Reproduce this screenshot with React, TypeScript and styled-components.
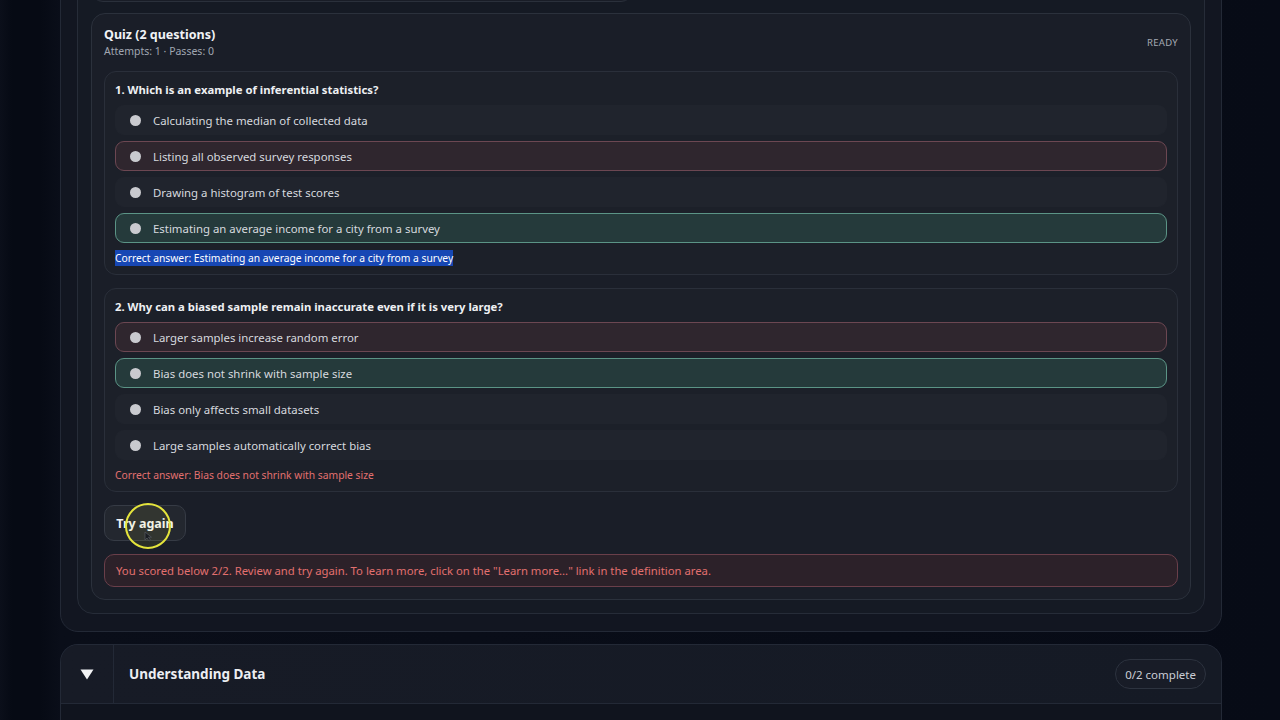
import React from "react";
import styled, { createGlobalStyle } from "styled-components";

const GlobalStyle = createGlobalStyle`
  html, body {
    margin: 0;
    padding: 0;
    height: 100%;
    overflow: hidden;
    background: #070b16;
  }
  body {
    font-family: "Noto Sans", "Open Sans", sans-serif;
    color: #e6e8ec;
  }
`;

const Page = styled.div`
  min-height: 720px;
  background: linear-gradient(90deg, #0b0f1a 0px, #060a14 12px, #060a14 40px, #0a0e19 60px, #070b16 100%);
  padding: 0 58px 0 60px;
  display: flex;
  flex-direction: column;
  gap: 12px;
`;

const ModuleCard = styled.section<{ $offset?: number }>`
  margin-top: ${(p) => p.$offset ?? 0}px;
  background: #121621;
  border: 1px solid #232936;
  border-radius: 18px;
  padding: 16px 16px 17px;
`;

const LessonBody = styled.div`
  background: #151a24;
  border: 1px solid #262c38;
  border-radius: 16px;
  padding: 13px;
  display: flex;
  flex-direction: column;
  gap: 11px;
`;

const DefinitionBox = styled.div`
  width: 540px;
  height: 60px;
  background: #191d27;
  border: 1px solid #2a303b;
  border-radius: 12px;
`;

const QuizCard = styled.div`
  background: #1a1e28;
  border: 1px solid #2b313c;
  border-radius: 14px;
  padding: 12px 12px 12px;
  display: flex;
  flex-direction: column;
  gap: 13px;
`;

const QuizHeader = styled.div`
  display: flex;
  justify-content: space-between;
  align-items: center;
`;

const QuizTitle = styled.div`
  font-size: 12.5px;
  font-weight: 700;
  line-height: 18px;
  color: #f1f3f6;
`;

const QuizMeta = styled.div`
  font-size: 10.5px;
  line-height: 14px;
  color: #a0a6b1;
`;

const Status = styled.div`
  font-size: 9.5px;
  letter-spacing: 0.3px;
  color: #a4aab4;
  text-transform: uppercase;
`;

const QuestionCard = styled.div`
  background: #1c2029;
  border: 1px solid #2a2f3a;
  border-radius: 12px;
  padding: 9px 10px 8px;
  display: flex;
  flex-direction: column;
`;

const QuestionTitle = styled.div`
  font-size: 11.3px;
  font-weight: 700;
  line-height: 18px;
  color: #eef0f3;
  margin-bottom: 6px;
`;

const Options = styled.div`
  display: flex;
  flex-direction: column;
  gap: 6px;
`;

type OptionState = "idle" | "wrong" | "right";

const optionColors: Record<OptionState, { bg: string; border: string }> = {
  idle: { bg: "#20242d", border: "#20242d" },
  wrong: { bg: "#2f262e", border: "#6c4752" },
  right: { bg: "#253a3b", border: "#5b9486" },
};

const OptionRow = styled.div<{ $state: OptionState }>`
  height: 30px;
  box-sizing: border-box;
  display: flex;
  align-items: center;
  gap: 12px;
  padding: 0 14px;
  border-radius: 9px;
  background: ${(p) => optionColors[p.$state].bg};
  border: 1px solid ${(p) => optionColors[p.$state].border};
  font-size: 11.4px;
  color: #d6d9df;
`;

const Radio = styled.span`
  width: 11px;
  height: 11px;
  border-radius: 50%;
  background: #c9cacf;
  flex-shrink: 0;
`;

const AnswerNote = styled.div<{ $tone: "selected" | "error" }>`
  margin-top: 8px;
  font-size: 10.3px;
  line-height: 15px;
  color: ${(p) => (p.$tone === "error" ? "#e2706f" : "#ffffff")};

  span {
    background: ${(p) => (p.$tone === "selected" ? "#1747b4" : "transparent")};
    padding: 1px 0;
  }
`;

const ButtonRow = styled.div`
  position: relative;
  display: flex;
`;

const RetryButton = styled.button`
  height: 36px;
  width: 82px;
  border-radius: 10px;
  background: #23272f;
  border: 1px solid #363b45;
  color: #f2f3f5;
  font-family: inherit;
  font-size: 12.5px;
  font-weight: 700;
  cursor: pointer;
`;

// click highlight left over from the screen recording
const CursorHalo = styled.svg`
  position: absolute;
  left: 20px;
  top: -3px;
  pointer-events: none;
`;

const ScoreMessage = styled.div`
  height: 33px;
  box-sizing: border-box;
  display: flex;
  align-items: center;
  padding: 0 11px;
  background: #2c2129;
  border: 1px solid #6a3f4a;
  border-radius: 10px;
  font-size: 11.3px;
  color: #e2706f;
`;

const SectionCard = styled.section`
  background: #131722;
  border: 1px solid #232936;
  border-bottom: none;
  border-radius: 18px 18px 0 0;
  overflow: hidden;
`;

const SectionHeader = styled.div`
  height: 58px;
  display: flex;
  align-items: stretch;
  border-bottom: 1px solid #232936;
  background: linear-gradient(90deg, #171b26, #151a25);
`;

const ToggleCell = styled.div`
  width: 52px;
  display: flex;
  align-items: center;
  justify-content: center;
  border-right: 1px solid #232936;
`;

const SectionTitle = styled.div`
  flex: 1;
  display: flex;
  align-items: center;
  padding-left: 15px;
  font-size: 13.5px;
  font-weight: 700;
  color: #eceef2;
`;

const ProgressPill = styled.div`
  align-self: center;
  margin-right: 15px;
  height: 30px;
  box-sizing: border-box;
  padding: 0 9px;
  display: flex;
  align-items: center;
  border: 1px solid #2d333f;
  border-radius: 999px;
  background: #181c27;
  font-size: 11.5px;
  color: #c9cdd5;
`;

const SectionBody = styled.div`
  height: 30px;
  background: #10141e;
`;

interface Question {
  title: string;
  options: { text: string; state: OptionState }[];
  answer: string;
  tone: "selected" | "error";
}

const questions: Question[] = [
  {
    title: "1. Which is an example of inferential statistics?",
    options: [
      { text: "Calculating the median of collected data", state: "idle" },
      { text: "Listing all observed survey responses", state: "wrong" },
      { text: "Drawing a histogram of test scores", state: "idle" },
      { text: "Estimating an average income for a city from a survey", state: "right" },
    ],
    answer: "Correct answer: Estimating an average income for a city from a survey",
    tone: "selected",
  },
  {
    title: "2. Why can a biased sample remain inaccurate even if it is very large?",
    options: [
      { text: "Larger samples increase random error", state: "wrong" },
      { text: "Bias does not shrink with sample size", state: "right" },
      { text: "Bias only affects small datasets", state: "idle" },
      { text: "Large samples automatically correct bias", state: "idle" },
    ],
    answer: "Correct answer: Bias does not shrink with sample size",
    tone: "error",
  },
];

const App: React.FC = () => {
  return (
    <Page>
      <GlobalStyle />
      <ModuleCard $offset={-91}>
        <LessonBody>
          <DefinitionBox />
          <QuizCard>
            <QuizHeader>
              <div>
                <QuizTitle>Quiz (2 questions)</QuizTitle>
                <QuizMeta>Attempts: 1 · Passes: 0</QuizMeta>
              </div>
              <Status>Ready</Status>
            </QuizHeader>

            {questions.map((q) => (
              <QuestionCard key={q.title}>
                <QuestionTitle>{q.title}</QuestionTitle>
                <Options>
                  {q.options.map((o) => (
                    <OptionRow key={o.text} $state={o.state}>
                      <Radio />
                      {o.text}
                    </OptionRow>
                  ))}
                </Options>
                <AnswerNote $tone={q.tone}>
                  <span>{q.answer}</span>
                </AnswerNote>
              </QuestionCard>
            ))}

            <ButtonRow>
              <RetryButton>Try again</RetryButton>
              <CursorHalo width="52" height="52" viewBox="0 0 52 52">
                <circle cx="24" cy="24" r="22" fill="rgba(230,230,60,0.08)" stroke="#e4e43c" strokeWidth="2" />
                <path
                  d="M21 30 l0 8 l2 -2 l2 3 l1.5 -0.8 l-2 -3 l3 0 z"
                  fill="#1a1d22"
                  stroke="#50545c"
                  strokeWidth="0.8"
                />
              </CursorHalo>
            </ButtonRow>

            <ScoreMessage>
              You scored below 2/2. Review and try again. To learn more, click on the "Learn more..." link in the
              definition area.
            </ScoreMessage>
          </QuizCard>
        </LessonBody>
      </ModuleCard>

      <SectionCard>
        <SectionHeader>
          <ToggleCell>
            <svg width="14" height="11" viewBox="0 0 14 11">
              <path d="M0.5 0.5 H13.5 L7 10.5 Z" fill="#f2f3f5" />
            </svg>
          </ToggleCell>
          <SectionTitle>Understanding Data</SectionTitle>
          <ProgressPill>0/2 complete</ProgressPill>
        </SectionHeader>
        <SectionBody />
      </SectionCard>
    </Page>
  );
};

export default App;
